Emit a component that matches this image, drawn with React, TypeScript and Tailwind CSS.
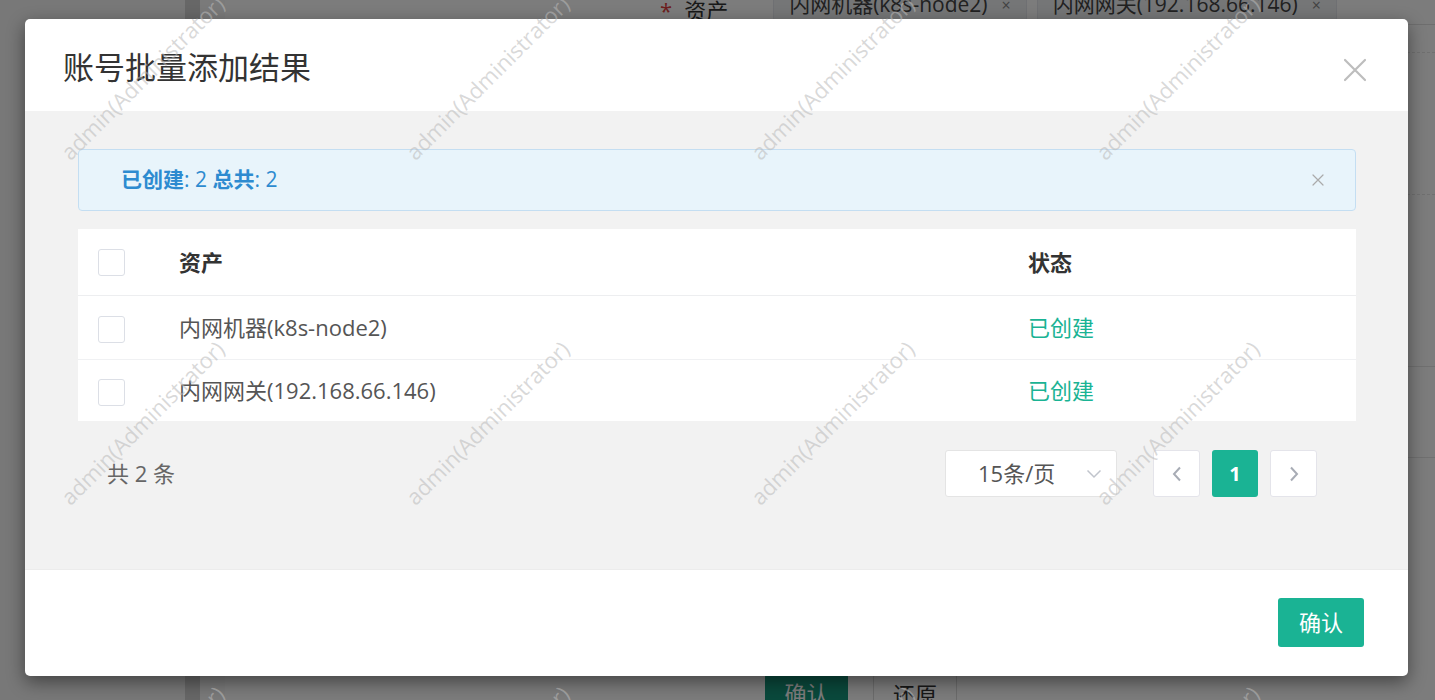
import React from "react";

const wmPoints: { x: number; y: number }[] = [];
for (let j = 0; j < 3; j++) {
  for (let k = -1; k < 5; k++) {
    wmPoints.push({ x: 72 + 345 * k, y: 163 + 345 * j });
  }
}

function CloseIcon({ size, color, width }: { size: number; color: string; width: number }) {
  return (
    <svg width={size} height={size} viewBox="0 0 24 24" fill="none">
      <path d="M2 2L22 22M22 2L2 22" stroke={color} strokeWidth={width} strokeLinecap="round" />
    </svg>
  );
}

function Checkbox() {
  return <div className="w-[27px] h-[27px] rounded-[3px] border border-[#dcdfe6] bg-white" />;
}

export default function App() {
  return (
    <div className="relative w-[1435px] h-[700px] overflow-hidden bg-white font-['Open_Sans','Noto_Sans_CJK_SC',sans-serif]">
      {/* background page */}
      <div className="flex h-full w-full">
        <div className="w-[185px] bg-[#f6f6f6]" />
        <div className="w-[15px] bg-[#d4d4d4]" />
        <div className="w-[25px] bg-[#fbfbfb]" />
        <div className="flex-1 flex flex-col bg-white">
          <div className="h-[25px] border-b border-[#e2e2e2] flex items-end pl-[435px] gap-[10px]">
            <div className="flex items-end h-[30px] mr-[35px] text-[22px] leading-none text-[#333] pb-[3px]">
              <span className="text-[#e04040] mr-[12px]">*</span>
              <span>资产</span>
            </div>
            <div className="flex items-center h-[32px] px-[15px] bg-[#f0f2f5] border border-[#e4e7ed] rounded-[3px] text-[21px] text-[#444] gap-[14px] translate-y-[-3px]">
              <span>内网机器(k8s-node2)</span>
              <span className="text-[16px] text-[#888]">×</span>
            </div>
            <div className="flex items-center h-[32px] px-[15px] bg-[#f0f2f5] border border-[#e4e7ed] rounded-[3px] text-[21px] text-[#444] gap-[14px] translate-y-[-3px]">
              <span>内网网关(192.168.66.146)</span>
              <span className="text-[16px] text-[#888]">×</span>
            </div>
          </div>
          <div className="h-[28px] border-b border-dashed border-[#e6e6e6]" />
          <div className="h-[142px] border-b border-dashed border-[#e6e6e6]" />
          <div className="h-[172px] border-b border-[#e6e6e6]" />
          <div className="h-[91px] border-b border-[#e6e6e6]" />
          <div className="flex-1 flex items-end pl-[540px] gap-[25px]">
            <div className="w-[83px] h-[26px] bg-[#15967b] rounded-t-[3px] text-white text-[22px] leading-none pt-[8px] text-center overflow-hidden">确认</div>
            <div className="w-[84px] h-[26px] border border-[#dcdcdc] border-b-0 rounded-t-[3px] text-[#333] text-[22px] leading-none pt-[8px] text-center overflow-hidden">还原</div>
          </div>
        </div>
      </div>

      {/* overlay */}
      <div className="absolute inset-0 bg-[rgba(0,0,0,0.515)]" />

      {/* modal */}
      <div className="absolute left-[25px] top-[19px] w-[1383px] h-[657px] bg-white rounded-[5px] shadow-[0_6px_18px_rgba(0,0,0,0.45)] flex flex-col overflow-hidden">
        <div className="h-[92px] flex items-center justify-between pl-[38px] pr-[41px]">
          <div className="text-[31px] leading-none text-[#333] mt-[4px]">账号批量添加结果</div>
          <div className="mt-[10px]">
            <CloseIcon size={24} color="#bdbdbd" width={2.2} />
          </div>
        </div>

        <div className="h-[458px] bg-[#f2f2f2] pt-[38px] pl-[53px] pr-[52px]">
          <div className="h-[62px] rounded-[4px] border border-[#c4def2] bg-[#e8f4fb] flex items-center justify-between pl-[42px] pr-[31px] text-[21px] text-[#2d8bd0]">
            <div>
              <span className="font-bold">已创建</span>: 2 <span className="font-bold">总共</span>: 2
            </div>
            <CloseIcon size={12} color="#aaaaaa" width={2.4} />
          </div>

          <div className="mt-[18px] bg-white text-[22px]">
            <div className="h-[67px] grid grid-cols-[101px_849px_1fr] items-center border-b border-[#edeef0] font-bold text-[#333]">
              <div className="pl-[20px]"><Checkbox /></div>
              <div>资产</div>
              <div>状态</div>
            </div>
            <div className="h-[64px] grid grid-cols-[101px_849px_1fr] items-center border-b border-[#f0f1f3] text-[#555]">
              <div className="pl-[20px] pt-[3px]"><Checkbox /></div>
              <div>内网机器(k8s-node2)</div>
              <div className="text-[#1ab394]">已创建</div>
            </div>
            <div className="h-[61px] grid grid-cols-[101px_849px_1fr] items-center text-[#555]">
              <div className="pl-[20px] pt-[3px]"><Checkbox /></div>
              <div>内网网关(192.168.66.146)</div>
              <div className="text-[#1ab394]">已创建</div>
            </div>
          </div>

          <div className="mt-[29px] h-[47px] flex items-center justify-between pl-[29px] pr-[39px]">
            <div className="text-[22px] text-[#666]">共 2 条</div>
            <div className="flex items-center">
              <div className="w-[172px] h-[47px] bg-white border border-[#e4e4e4] rounded-[3px] flex items-center pl-[32px] pr-[14px] justify-between text-[22px] text-[#555]">
                <span>15条/页</span>
                <svg width="16" height="10" viewBox="0 0 16 10" fill="none">
                  <path d="M1.5 1.5L8 8L14.5 1.5" stroke="#c0c4cc" strokeWidth="1.5" />
                </svg>
              </div>
              <div className="ml-[36px] w-[47px] h-[47px] bg-white border border-[#e4e4ea] rounded-[3px] flex items-center justify-center">
                <svg width="10" height="16" viewBox="0 0 10 16" fill="none">
                  <path d="M8 1.5L2 8L8 14.5" stroke="#a8acb5" strokeWidth="2" />
                </svg>
              </div>
              <div className="ml-[12px] w-[46px] h-[47px] bg-[#1ab394] rounded-[3px] flex items-center justify-center text-white text-[20px] font-bold">1</div>
              <div className="ml-[12px] w-[47px] h-[47px] bg-white border border-[#e4e4ea] rounded-[3px] flex items-center justify-center">
                <svg width="10" height="16" viewBox="0 0 10 16" fill="none">
                  <path d="M2 1.5L8 8L2 14.5" stroke="#a8acb5" strokeWidth="2" />
                </svg>
              </div>
            </div>
          </div>
        </div>

        <div className="flex-1 border-t border-[#ececec] flex justify-end items-start pt-[28px] pr-[44px]">
          <div className="w-[86px] h-[49px] bg-[#1ab394] rounded-[3px] text-white text-[22px] flex items-center justify-center">确认</div>
        </div>
      </div>

      {/* watermark */}
      <div className="absolute inset-0 pointer-events-none overflow-hidden">
        {wmPoints.map((p, i) => (
          <span
            key={i}
            className="absolute whitespace-nowrap origin-bottom-left -rotate-45 text-[22px] leading-none text-[rgba(185,185,185,0.55)]"
            style={{ left: p.x, top: p.y - 22 }}
          >
            admin(Administrator)
          </span>
        ))}
      </div>
    </div>
  );
}
